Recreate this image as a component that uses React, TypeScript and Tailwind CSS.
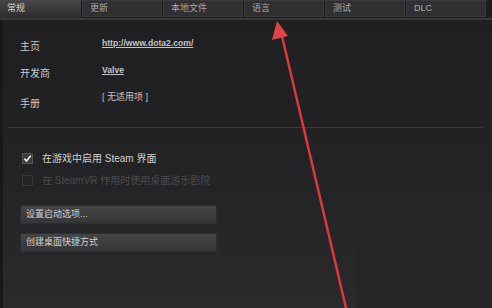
import React from 'react';

const tabs = ['常规', '更新', '本地文件', '语言', '测试', 'DLC'];

export default function App() {
  return (
    <div
      className="relative w-[492px] h-[308px] overflow-hidden bg-[#1e1e20] text-[#c4c4c4]"
      style={{ fontFamily: '"Liberation Sans", "Noto Sans CJK SC", sans-serif' }}
    >
      {/* Tabs */}
      <div className="flex h-[18px] gap-[1px] bg-[#1c1c1e]">
        {tabs.map((t, i) => (
          <div
            key={t}
            className={
              i === 0
                ? 'w-[81px] h-[18px] pl-[7px] flex items-center text-[9px] text-[#d4d4d4] bg-gradient-to-b from-[#48484a] to-[#2c2c2e]'
                : 'w-[80px] h-[17px] pl-[7px] flex items-center text-[9px] text-[#a8a8a8] bg-[#303032] border border-[#3a3a3c]'
            }
          >
            {t}
          </div>
        ))}
      </div>
      <div className="h-[2px] bg-[#38383a]" />

      {/* Main panel */}
      <div className="h-[288px] bg-gradient-to-b from-[#1f1f21] via-[#232325] to-[#2a2a2c] border-l-[3px] border-[#18181a] flex flex-col">
        <div className="pl-[17px] pt-[17px] flex flex-col">
          <div className="flex h-[27px] items-start">
            <div className="w-[82px] text-[10px] text-[#c8c8c8] pt-[2px]">主页</div>
            <div className="text-[8.6px] font-bold underline text-[#c4c4c4]">http://www.dota2.com/</div>
          </div>
          <div className="flex h-[27px] items-start">
            <div className="w-[82px] text-[10px] text-[#c8c8c8] pt-[2px]">开发商</div>
            <div className="text-[8.6px] font-bold underline text-[#c4c4c4]">Valve</div>
          </div>
          <div className="flex h-[27px] items-start">
            <div className="w-[82px] text-[10px] text-[#c8c8c8] pt-[5px]">手册</div>
            <div className="text-[9px] text-[#c4c4c4]">[ 无适用项 ]</div>
          </div>
        </div>

        <div className="mt-[9px] ml-[5px] w-[475px] h-[1px] bg-[#3a3a3c]" />

        <div className="pl-[19px] pt-[23px] flex flex-col gap-[7px]">
          <div className="flex items-center gap-[9px]">
            <div className="w-[11px] h-[11px] bg-[#3a3a3c] border border-[#555] flex items-center justify-center">
              <svg width="9" height="9" viewBox="0 0 10 10">
                <path d="M1.5 5.2 L4 7.8 L8.6 1.8" stroke="#f2f2f2" strokeWidth="1.8" fill="none" />
              </svg>
            </div>
            <span className="text-[10px] text-[#cfcfcf]">在游戏中启用 Steam 界面</span>
          </div>
          <div className="flex items-center gap-[9px]">
            <div className="w-[11px] h-[11px] bg-[#232325] border border-[#363638]" />
            <span className="text-[10px] text-[#4a4a4c]">在 SteamVR 作用时使用桌面游乐剧院</span>
          </div>
        </div>

        <div className="pl-[17px] pt-[17px] flex flex-col gap-[9px]">
          <div className="w-[197px] h-[19px] pl-[5px] flex items-center text-[9px] text-[#d0d0d0] bg-gradient-to-b from-[#454547] to-[#363638] border border-[#2e2e30]">
            设置启动选项...
          </div>
          <div className="w-[197px] h-[19px] pl-[5px] flex items-center text-[9px] text-[#d0d0d0] bg-gradient-to-b from-[#454547] to-[#363638] border border-[#2e2e30]">
            创建桌面快捷方式
          </div>
        </div>
      </div>

      {/* faint box bottom right */}
      <div className="absolute left-[356px] top-[230px] w-[136px] h-[78px] bg-[#252527]" />

      {/* red annotation arrow */}
      <svg className="absolute left-0 top-0" width="492" height="308" viewBox="0 0 492 308">
        <line x1="282" y1="36" x2="346" y2="308" stroke="#d63a3a" strokeWidth="2.5" />
        <polygon points="277,21 272,40 288,36" fill="#e04444" />
      </svg>
    </div>
  );
}
